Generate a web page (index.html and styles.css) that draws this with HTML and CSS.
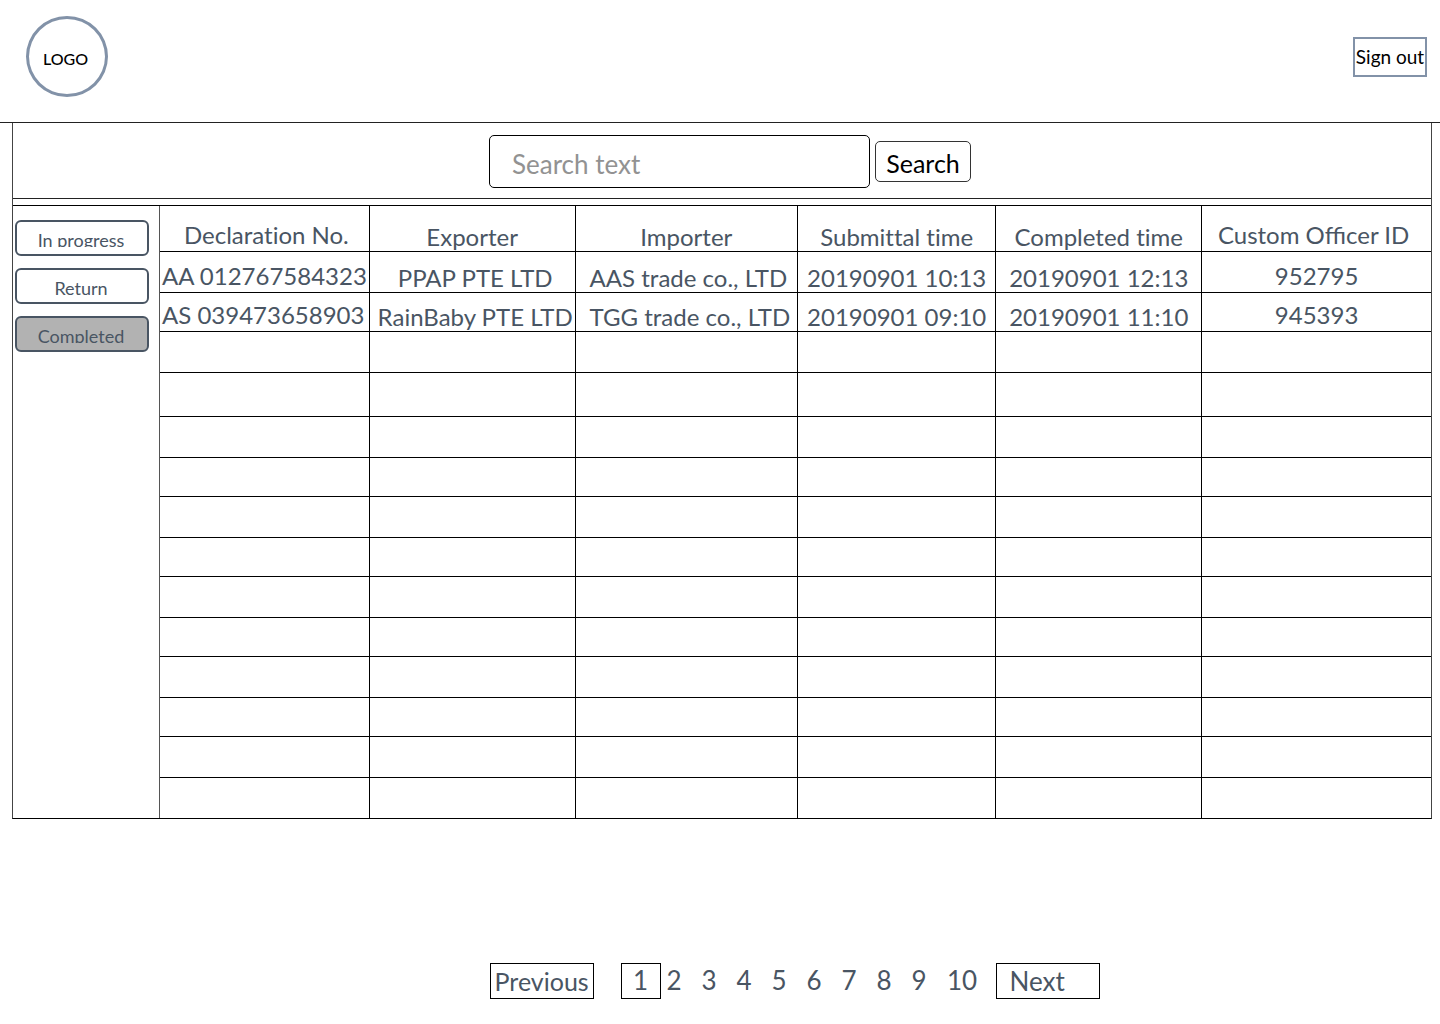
FILE: index.html
```html
<!DOCTYPE html>
<html lang="en">
<head>
<meta charset="utf-8">
<title>Declarations</title>
<link rel="stylesheet" href="styles.css">
</head>
<body>
<header class="topbar">
  <div class="logo">LOGO</div>
  <button class="sign-out" type="button">Sign out</button>
</header>
<main>
  <div class="panel">
    <form class="search" role="search">
      <input class="search-input" type="text" placeholder="Search text" aria-label="Search text">
      <button class="search-button" type="button">Search</button>
    </form>
    <div class="content">
      <nav class="sidebar" aria-label="Status">
        <button class="tab" type="button"><span class="tab-label">In progress</span></button>
        <button class="tab" type="button"><span class="tab-label">Return</span></button>
        <button class="tab tab-active" type="button"><span class="tab-label">Completed</span></button>
      </nav>
      <table class="records">
        <colgroup>
          <col class="col-number"><col class="col-exporter"><col class="col-importer">
          <col class="col-submitted"><col class="col-completed"><col class="col-officer">
        </colgroup>
        <thead>
          <tr><th class="raised declaration">Declaration No.</th><th>Exporter</th><th>Importer</th><th>Submittal time</th><th>Completed time</th><th class="raised officer">Custom Officer ID</th></tr>
        </thead>
        <tbody>
          <tr><td class="raised number">AA 012767584323</td><td class="exporter">PPAP PTE LTD</td><td class="importer">AAS trade co., LTD</td><td>20190901 10:13</td><td>20190901 12:13</td><td class="raised">952795</td></tr>
          <tr class="short"><td class="raised number">AS 039473658903</td><td class="exporter">RainBaby PTE LTD</td><td class="importer">TGG trade co., LTD</td><td>20190901 09:10</td><td>20190901 11:10</td><td class="raised">945393</td></tr>
          <tr><td></td><td></td><td></td><td></td><td></td><td></td></tr>
          <tr class="tall"><td></td><td></td><td></td><td></td><td></td><td></td></tr>
          <tr><td></td><td></td><td></td><td></td><td></td><td></td></tr>
          <tr class="short"><td></td><td></td><td></td><td></td><td></td><td></td></tr>
          <tr><td></td><td></td><td></td><td></td><td></td><td></td></tr>
          <tr class="short"><td></td><td></td><td></td><td></td><td></td><td></td></tr>
          <tr><td></td><td></td><td></td><td></td><td></td><td></td></tr>
          <tr class="short"><td></td><td></td><td></td><td></td><td></td><td></td></tr>
          <tr><td></td><td></td><td></td><td></td><td></td><td></td></tr>
          <tr class="short"><td></td><td></td><td></td><td></td><td></td><td></td></tr>
          <tr><td></td><td></td><td></td><td></td><td></td><td></td></tr>
          <tr><td></td><td></td><td></td><td></td><td></td><td></td></tr>
        </tbody>
      </table>
    </div>
  </div>
  <nav class="pagination" aria-label="Pages">
    <button class="step" type="button">Previous</button>
    <div class="pages">
      <a class="page page-current" href="#1" aria-current="page">1</a>
      <a class="page" href="#2">2</a>
      <a class="page" href="#3">3</a>
      <a class="page" href="#4">4</a>
      <a class="page" href="#5">5</a>
      <a class="page" href="#6">6</a>
      <a class="page" href="#7">7</a>
      <a class="page" href="#8">8</a>
      <a class="page" href="#9">9</a>
      <a class="page page-wide" href="#10">10</a>
    </div>
    <button class="step step-next" type="button">Next</button>
  </nav>
</main>
</body>
</html>
```
FILE: styles.css
```css
* {
  box-sizing: border-box;
}

body {
  margin: 0;
  background: #fff;
  color: #495563;
  font-family: Lato, sans-serif;
}

button,
input {
  margin: 0;
  font-family: inherit;
}

.topbar {
  display: flex;
  align-items: center;
  justify-content: space-between;
  padding: 16px 13px 25px 26px;
  border-bottom: 1px solid #222;
}

.logo {
  display: flex;
  align-items: center;
  justify-content: center;
  width: 82px;
  height: 81px;
  padding: 4px 3px 0 0;
  border: 3px solid #8292a8;
  border-radius: 50%;
  color: #000;
  font-size: 16px;
  font-weight: 500;
}

.sign-out {
  width: 74px;
  height: 40px;
  padding: 0;
  border: 2px solid #8292a8;
  background: #fff;
  color: #000;
  font-size: 19px;
  white-space: nowrap;
}

.panel {
  margin: 0 8px 0 12px;
  border: 1px solid #444;
  border-top: 0;
  border-bottom-color: #000;
}

.search {
  display: flex;
  align-items: center;
  justify-content: center;
  gap: 5px;
  height: 76px;
  padding: 2px 0 0 16px;
  border-bottom: 1px solid #222;
}

.search-input {
  width: 381px;
  height: 53px;
  padding: 4px 22px 0;
  border: 1px solid #000;
  border-radius: 5px;
  background: #fff;
  font-size: 26px;
}

.search-input::placeholder {
  color: #929292;
}

.search-button {
  width: 96px;
  height: 41px;
  padding: 2px 0 0;
  border: 1px solid #333;
  border-radius: 5px;
  background: #fff;
  color: #000;
  font-size: 25px;
  line-height: 32px;
}

.content {
  display: flex;
  margin-top: 6px;
  border-top: 1px solid #000;
}

.sidebar {
  display: flex;
  flex-direction: column;
  flex: 0 0 147px;
  gap: 12px;
  padding: 14px 10px 0 2px;
  border-right: 1px solid #555;
}

.tab {
  display: flex;
  justify-content: center;
  align-items: flex-start;
  height: 36px;
  padding: 7px 2px 0 0;
  border: 2px solid #495563;
  border-radius: 6px;
  background: #fff;
  color: #495563;
  font-size: 18px;
}

.tab-active {
  background: #b2b2b2;
}

/* The label box ends just under the baseline, trimming descenders. */
.tab-label {
  height: 18px;
  overflow: hidden;
  line-height: 22px;
}

.records {
  flex: 1;
  table-layout: fixed;
  border-collapse: separate;
  border-spacing: 0;
  font-size: 24px;
  font-variant-ligatures: no-common-ligatures;
  line-height: 28px;
}

.col-number { width: 16.5%; }
.col-exporter { width: 16.2%; }
.col-importer { width: 17.5%; }
.col-submitted { width: 15.6%; }
.col-completed { width: 16.2%; }
.col-officer { width: 18%; }

.records th,
.records td {
  height: 41px;
  padding: 0;
  border-right: 1px solid #000;
  border-bottom: 1px solid #000;
  font-weight: 400;
  text-align: center;
  vertical-align: bottom;
  white-space: nowrap;
}

.records th {
  height: 46px;
}

.records .short td {
  height: 39px;
}

.records .tall td {
  height: 44px;
}

.records tr > :last-child {
  border-right: 0;
}

.records tbody tr:last-child td {
  height: 40px;
  border-bottom: 0;
}

.records .raised {
  padding-bottom: 2px;
}

.records .declaration {
  padding-left: 4px;
}

.records .officer {
  padding-right: 6px;
  font-variant-ligatures: normal;
}

.records .number {
  padding-left: 2px;
  text-align: left;
}

.records .exporter {
  padding-left: 6px;
}

.records .importer {
  padding-left: 14px;
  text-align: left;
}

.pagination {
  display: flex;
  align-items: center;
  margin-top: 144px;
  padding: 0 0 24px 34%;
}

.step {
  width: 104px;
  height: 36px;
  padding: 0;
  border: 1px solid #000;
  background: #fff;
  color: #495563;
  font-size: 25px;
  line-height: 32px;
}

.step-next {
  padding-left: 13px;
  font-size: 26px;
  text-align: left;
}

.pages {
  display: flex;
  margin: 0 4px 0 27px;
}

.page {
  width: 27px;
  height: 36px;
  margin-right: 8px;
  color: #495563;
  font-size: 26px;
  line-height: 34px;
  text-align: center;
  text-decoration: none;
}

.page-current {
  width: 40px;
  margin-right: 0;
  border: 1px solid #000;
  line-height: 32px;
}

.page-wide {
  width: 43px;
}
```
